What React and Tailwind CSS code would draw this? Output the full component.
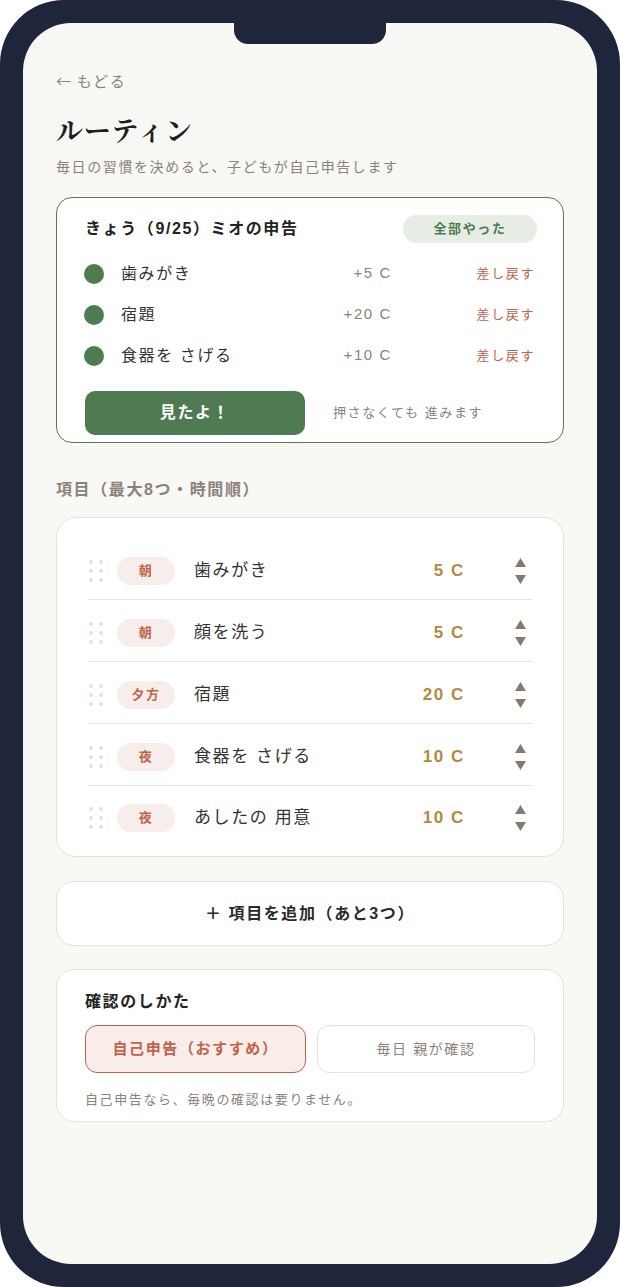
const today = [
  { name: '歯みがき', pts: '+5 C' },
  { name: '宿題', pts: '+20 C' },
  { name: '食器を さげる', pts: '+10 C' },
]

const items = [
  { time: '朝', name: '歯みがき', pts: '5 C' },
  { time: '朝', name: '顔を洗う', pts: '5 C' },
  { time: '夕方', name: '宿題', pts: '20 C' },
  { time: '夜', name: '食器を さげる', pts: '10 C' },
  { time: '夜', name: 'あしたの 用意', pts: '10 C' },
]

function DragDots() {
  return (
    <div className="grid grid-cols-2 gap-x-[6px] gap-y-[5px] w-[14px] shrink-0 ml-[1px]">
      {[0, 1, 2, 3, 4, 5].map((i) => (
        <span key={i} className="w-[4px] h-[4px] rounded-full bg-[#e6e1d3]" />
      ))}
    </div>
  )
}

function Arrows() {
  return (
    <div className="w-[24px] flex flex-col items-center gap-[8px] shrink-0">
      <svg width="11" height="9" viewBox="0 0 11 9"><path d="M5.5 0L11 9H0z" fill="#857a6e" /></svg>
      <svg width="11" height="9" viewBox="0 0 11 9"><path d="M0 0h11L5.5 9z" fill="#857a6e" /></svg>
    </div>
  )
}

export default function App() {
  return (
    <div
      className="w-[620px] h-[1287px] bg-[#1f253a] p-[23px] rounded-[64px] tracking-[0.1em]"
      style={{ fontFamily: '"Liberation Sans", "Noto Sans CJK JP", sans-serif' }}
    >
      <div className="relative w-full h-full bg-[#f8f8f4] rounded-[48px] overflow-hidden px-[33px]">
        {/* notch */}
        <div className="absolute left-[211px] top-0 w-[152px] h-[21px] bg-[#1f253a] rounded-b-[14px]" />

        <div className="pt-[48px] text-[15px] leading-[20px] h-[68px] text-[#8c8279]">
          <span className="tracking-normal" style={{ fontFamily: '"Noto Sans CJK JP", sans-serif' }}>←</span> もどる
        </div>
        <h1
          className="mt-[22px] text-[27px] leading-[34px] font-bold text-[#1e1e1e] tracking-[0.03em]"
          style={{ fontFamily: '"Noto Serif CJK JP", "Liberation Serif", serif' }}
        >
          ルーティン
        </h1>
        <p className="mt-[10px] text-[14px] leading-[20px] text-[#8c8279]">毎日の習慣を決めると、子どもが自己申告します</p>

        {/* today card */}
        <div className="mt-[20px] bg-white border border-[#4e7b50] rounded-[16px] px-[28px] pt-[17px] pb-[7px]">
          <div className="flex items-center justify-between h-[28px] mb-[10px]">
            <span className="text-[16px] font-bold text-[#222]">きょう（9/25）ミオの申告</span>
            <span className="h-[28px] w-[134px] -mr-[2px] rounded-full bg-[#e7ece5] text-[#4e7b50] text-[13px] font-bold flex items-center justify-center">全部やった</span>
          </div>
          {today.map((t) => (
            <div key={t.name} className="flex items-center h-[41px]">
              <span className="w-[20px] h-[20px] rounded-full bg-[#4e7b50] shrink-0 -ml-[1px]" />
              <span className="ml-[17px] flex-1 text-[16px] text-[#333]">{t.name}</span>
              <span className="text-[15px] text-[#8c8279]">{t.pts}</span>
              <span className="w-[143px] text-right text-[13px] text-[#c0634b]">差し戻す</span>
            </div>
          ))}
          <div className="mt-[15px] flex items-center">
            <button className="w-[220px] h-[44px] rounded-[10px] bg-[#4e7b50] text-white text-[16px] font-bold">見たよ！</button>
            <span className="ml-[28px] text-[13px] text-[#8c8279]">押さなくても 進みます</span>
          </div>
        </div>

        <div className="mt-[36px] mb-[16px] text-[16px] leading-[22px] font-bold text-[#8c8279]">項目（最大8つ・時間順）</div>

        {/* items card */}
        <div className="bg-white border border-[#e6e1d5] rounded-[20px] px-[31px] pt-[20px] pb-[11px]">
          {items.map((it, i) => (
            <div
              key={it.name}
              className={`flex items-center pt-[5px] ${i < items.length - 1 ? 'h-[62px] border-b border-[#e8e3d8]' : 'h-[59px]'}`}
            >
              <DragDots />
              <span className="ml-[14px] w-[58px] h-[28px] rounded-full bg-[#f7eeeb] text-[#c0634b] text-[13px] font-bold flex items-center justify-center shrink-0">
                {it.time}
              </span>
              <span className="ml-[19px] flex-1 text-[17px] text-[#333]">{it.name}</span>
              <span className="text-[17px] font-bold text-[#b5893f] mr-[43px]">{it.pts}</span>
              <Arrows />
            </div>
          ))}
        </div>

        {/* add */}
        <button className="mt-[24px] w-full h-[65px] bg-white border border-[#e6e1d5] rounded-[18px] text-[16px] font-bold text-[#2a2a2a]">
          ＋ 項目を追加（あと3つ）
        </button>

        {/* confirm */}
        <div className="mt-[23px] bg-white border border-[#e6e1d5] rounded-[18px] px-[28px] pt-[21px] pb-[11px]">
          <div className="text-[16px] leading-[22px] font-bold text-[#222]">確認のしかた</div>
          <div className="mt-[12px] flex gap-[11px]">
            <button className="w-[221px] h-[48px] rounded-[12px] bg-[#f8ede9] border border-[#c0634b] text-[#c0634b] text-[15px] font-bold">
              自己申告（おすすめ）
            </button>
            <button className="flex-1 h-[48px] rounded-[12px] bg-white border border-[#e6e1d5] text-[#8c8279] text-[14px]">
              毎日 親が確認
            </button>
          </div>
          <p className="mt-[17px] text-[13px] leading-[20px] text-[#8c8279]">自己申告なら、毎晩の確認は要りません。</p>
        </div>
      </div>
    </div>
  )
}
